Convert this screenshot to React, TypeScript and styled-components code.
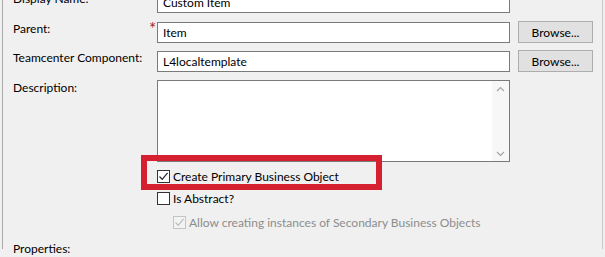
import React from "react";
import styled, { createGlobalStyle } from "styled-components";

const Global = createGlobalStyle`
  html, body { margin: 0; padding: 0; background: #f0f0f0; overflow: hidden; }
  body { font-family: "Lato", "Noto Sans", sans-serif; font-size: 12px; color: #000; }
`;

const Page = styled.div`
  width: 605px;
  height: 257px;
  position: relative;
  overflow: hidden;
  background: #f0f0f0;
`;

const Panel = styled.div`
  margin-left: 2px;
  width: 601px;
  height: 257px;
  border-left: 1px solid #a8a8a8;
  border-right: 1px solid #c8c8c8;
  box-sizing: border-box;
  padding-left: 10px;
`;

const Form = styled.div`
  display: grid;
  grid-template-columns: 136px 353px 75px;
  column-gap: 8px;
  margin-top: -8px;
`;

const Label = styled.div<{ $gap?: number }>`
  align-self: start;
  line-height: 16px;
  margin-top: ${(p) => (p.$gap ?? 0) - 1}px;
  white-space: nowrap;
  position: relative;
`;

const Star = styled.span`
  position: absolute;
  left: 136px;
  top: 0px;
  color: #a0282a;
  font-size: 17px;
  line-height: 16px;
`;

const Field = styled.div<{ $gap?: number }>`
  height: 21px;
  margin-top: ${(p) => p.$gap ?? 0}px;
  box-sizing: border-box;
  border: 1px solid #7a7a7a;
  background: #fff;
  padding-left: 5px;
  display: flex;
  align-items: center;
  white-space: nowrap;
`;

const Button = styled.div<{ $gap?: number }>`
  height: 22px;
  margin-top: ${(p) => (p.$gap ?? 0) - 1}px;
  box-sizing: border-box;
  border: 1px solid #adadad;
  background: #e1e1e1;
  display: flex;
  align-items: center;
  justify-content: center;
`;

const TextArea = styled.div`
  height: 82px;
  margin-top: 8px;
  box-sizing: border-box;
  border: 1px solid #7a7a7a;
  background: #fff;
  display: flex;
  justify-content: flex-end;
`;

const ScrollBar = styled.div`
  width: 17px;
  background: #f7f7f7;
  display: flex;
  flex-direction: column;
  justify-content: space-between;
  align-items: center;
  padding: 5px 0 4px;
  box-sizing: border-box;
`;

const Checks = styled.div`
  display: flex;
  flex-direction: column;
  padding-left: 144px;
  margin-top: 6px;
`;

const CheckRow = styled.div<{ $indent?: number; $gap?: number; $disabled?: boolean }>`
  display: flex;
  align-items: center;
  gap: 3px;
  height: 16px;
  margin-left: ${(p) => p.$indent ?? 0}px;
  margin-top: ${(p) => p.$gap ?? 0}px;
  color: ${(p) => (p.$disabled ? "#8d8d8d" : "#000")};
  white-space: nowrap;
`;

const Box = styled.div<{ $disabled?: boolean }>`
  width: 13px;
  height: 13px;
  box-sizing: border-box;
  border: 1px solid ${(p) => (p.$disabled ? "#c4c4c4" : "#333")};
  background: ${(p) => (p.$disabled ? "#f3f3f3" : "#fff")};
  display: flex;
  align-items: center;
  justify-content: center;
  flex: none;
`;

const Properties = styled.div`
  margin-top: 11px;
  line-height: 16px;
`;

const Highlight = styled.div`
  position: absolute;
  left: 141px;
  top: 155px;
  width: 241px;
  height: 35px;
  box-sizing: border-box;
  border: 6px solid #d4202f;
`;

const Check = ({ color }: { color: string }) => (
  <svg width="11" height="11" viewBox="0 0 11 11">
    <path d="M1.5 5.5 L4.2 8.3 L9.6 1.8" fill="none" stroke={color} strokeWidth="1.2" />
  </svg>
);

const Chevron = ({ up }: { up?: boolean }) => (
  <svg width="9" height="6" viewBox="0 0 9 6">
    <path d={up ? "M1 5 L4.5 1.5 L8 5" : "M1 1 L4.5 4.5 L8 1"} fill="none" stroke="#a6a6a6" strokeWidth="1.2" />
  </svg>
);

export default function App() {
  return (
    <Page>
      <Global />
      <Panel>
        <Form>
          <Label>Display Name:</Label>
          <Field>Custom Item</Field>
          <div />

          <Label $gap={9}>
            Parent:
            <Star>*</Star>
          </Label>
          <Field $gap={9}>Item</Field>
          <Button $gap={9}>Browse...</Button>

          <Label $gap={8}>Teamcenter Component:</Label>
          <Field $gap={8}>L4localtemplate</Field>
          <Button $gap={8}>Browse...</Button>

          <Label $gap={9}>Description:</Label>
          <TextArea>
            <ScrollBar>
              <Chevron up />
              <Chevron />
            </ScrollBar>
          </TextArea>
          <div />
        </Form>
        <Checks>
          <CheckRow>
            <Box>
              <Check color="#222" />
            </Box>
            Create Primary Business Object
          </CheckRow>
          <CheckRow $gap={6}>
            <Box />
            Is Abstract?
          </CheckRow>
          <CheckRow $indent={16} $gap={8} $disabled>
            <Box $disabled>
              <Check color="#bdbdbd" />
            </Box>
            Allow creating instances of Secondary Business Objects
          </CheckRow>
        </Checks>
        <Properties>Properties:</Properties>
      </Panel>
      <Highlight />
    </Page>
  );
}
